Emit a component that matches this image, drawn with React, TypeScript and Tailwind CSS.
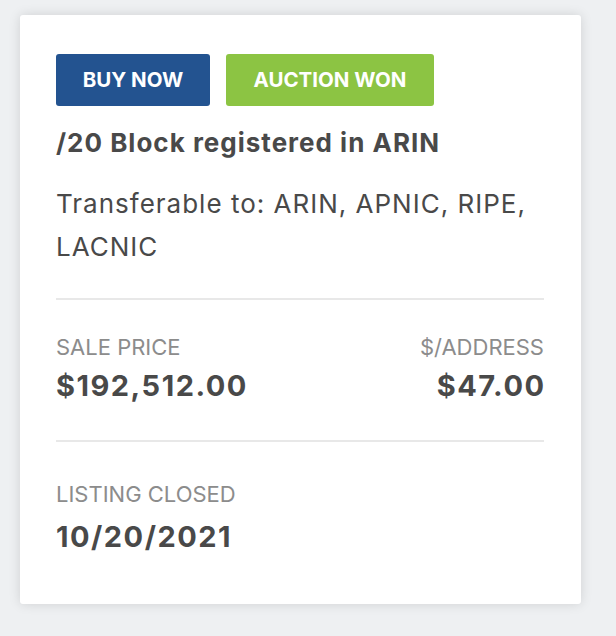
import React from "react";

function Stat({ label, value, right }: { label: string; value: string; right?: boolean }) {
  return (
    <div className={right ? "text-right" : ""}>
      <div className="text-[22px] leading-[28px] text-[#8c8c8c] uppercase">{label}</div>
      <div className={"mt-[8px] text-[29px] leading-[34px] font-bold tracking-[1.5px] " + (right ? "-mr-[1.5px]" : "")}>{value}</div>
    </div>
  );
}

export default function App() {
  return (
    <div className="w-[616px] h-[636px] bg-[#eef0f2] pt-[15px] pl-[20px] font-[family-name:Inter,sans-serif]">
      <div className="w-[561px] h-[589px] bg-white rounded-[3px] shadow-[0_0_12px_rgba(0,0,0,0.13)] pt-[39px] pl-[36px] pr-[37px] text-[#494949]">
        <div className="flex gap-[16px]">
          <div className="h-[52px] w-[154px] rounded-[3px] bg-[#235390] text-white font-bold text-[20.5px] flex items-center justify-center">BUY NOW</div>
          <div className="h-[52px] w-[208px] rounded-[3px] bg-[#8cc443] text-white font-bold text-[20.5px] flex items-center justify-center">AUCTION WON</div>
        </div>
        <div className="mt-[21px] text-[26px] leading-[32px] font-bold tracking-[1px]">/20 Block registered in ARIN</div>
        <div className="mt-[23px] text-[26px] leading-[43px] tracking-[1px]">Transferable to: ARIN, APNIC, RIPE, LACNIC</div>
        <div className="mt-[30px] h-[2px] bg-[#e8e8e8]" />
        <div className="mt-[33px] flex justify-between">
          <Stat label="Sale Price" value="$192,512.00" />
          <Stat label="$/Address" value="$47.00" right />
        </div>
        <div className="mt-[37px] h-[2px] bg-[#e8e8e8]" />
        <div className="mt-[38px]">
          <div className="text-[22px] leading-[28px] text-[#8c8c8c] uppercase">Listing Closed</div>
          <div className="mt-[12px] text-[29px] leading-[34px] font-bold tracking-[1.5px]">10/20/2021</div>
        </div>
      </div>
    </div>
  );
}
